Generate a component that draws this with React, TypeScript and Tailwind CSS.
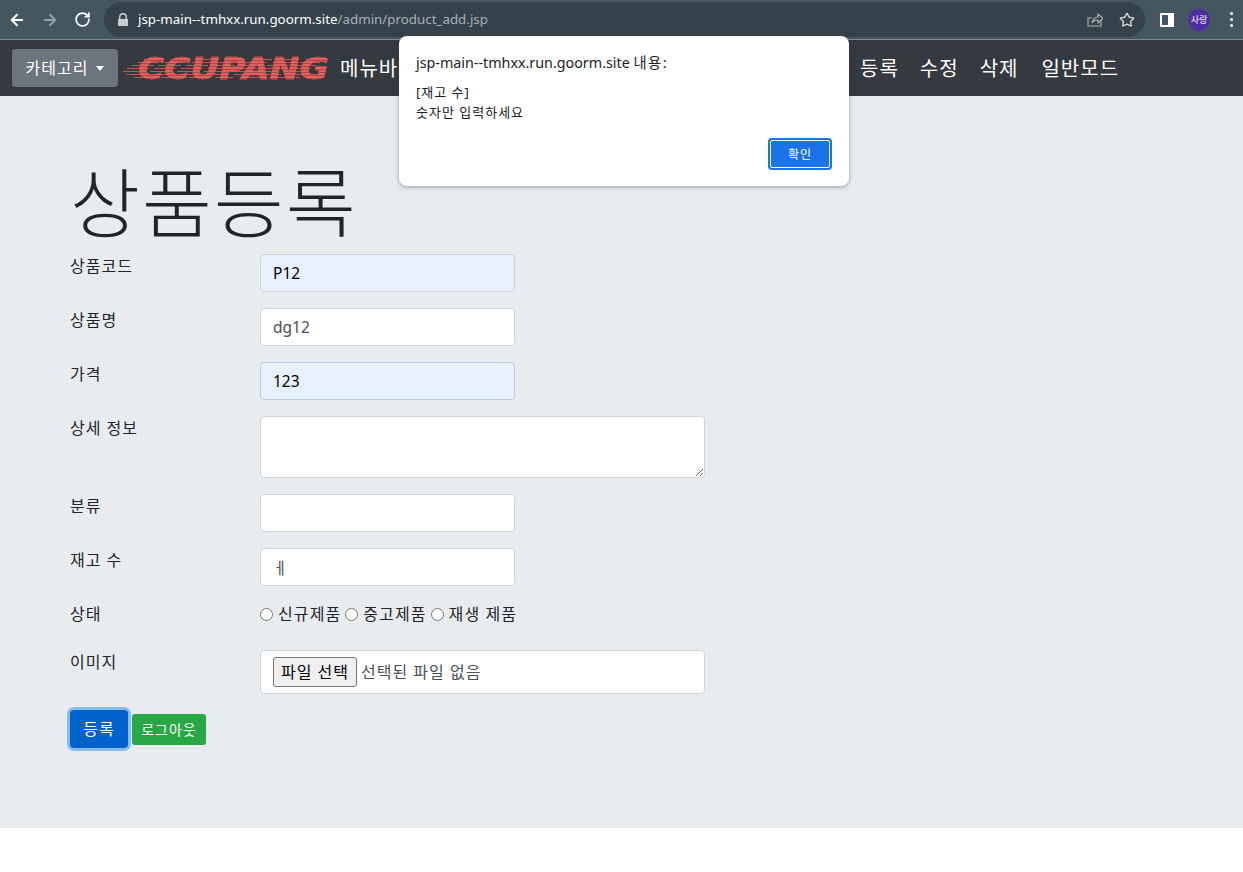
import { ArrowLeft, ArrowRight, RotateCw, Star } from "lucide-react";

const FONT = "font-['Noto_Sans','Noto_Sans_CJK_KR',sans-serif]";

const Field = ({ label, children, className = "mb-4" }: { label: string; children: React.ReactNode; className?: string }) => (
  <div className={`flex ${className}`}>
    <label className="w-[190px] shrink-0 text-[16px] leading-6 tracking-[1px] text-[#212529]">{label}</label>
    {children}
  </div>
);

const inputBase = "h-[38px] w-[255px] rounded border px-3 text-[15.5px] leading-6 outline-none";
const inputClass = `${inputBase} border-[#ced4da] bg-white text-[#495057]`;

const Radio = ({ label }: { label: string }) => (
  <span className="mr-[4px] flex items-center gap-[5px]">
    <span className="h-[13px] w-[13px] rounded-full border border-[#767676] bg-white" />
    {label}
  </span>
);

const Logo = () => (
  <div className="relative ml-1 flex h-[26px] w-[208px] items-center">
    {/* speed lines behind the letters */}
    <svg className="absolute top-0 left-0" width="208" height="26" viewBox="0 0 208 26">
      <g stroke="#c9524f" strokeWidth="1">
        <path d="M22 4.5h180M16 7.5h182" strokeDasharray="20 7" />
        <path d="M10 10.5h184M5 13.5h186" strokeDasharray="22 5" />
        <path d="M1 16.5h186M4 19.5h180" strokeDasharray="20 7" />
        <path d="M12 22.5h166" strokeDasharray="18 9" />
      </g>
    </svg>
    <span className="absolute top-0 right-[1px] origin-right scale-x-[1.15] bg-[repeating-linear-gradient(180deg,#e8605c_0px,#e8605c_2px,#a8484a_2px,#a8484a_3px)] bg-clip-text font-['DejaVu_Sans',sans-serif] text-[31px] leading-[26px] font-bold tracking-[0px] text-transparent italic [-webkit-text-stroke:0.5px_#d9534f]">
      CCUPANG
    </span>
  </div>
);

export default function App() {
  return (
    <div className={`relative min-h-[872px] bg-white ${FONT}`}>
      {/* browser toolbar */}
      <div className="flex h-10 items-center border-b border-[#7d8c94] bg-[#445761] pr-2 pl-2">
        <ArrowLeft className="h-[18px] w-[18px] text-white" strokeWidth={2.5} />
        <ArrowRight className="ml-[15px] h-[18px] w-[18px] text-[#93a0a7]" strokeWidth={2.5} />
        <RotateCw className="ml-[15px] h-[17px] w-[17px] text-white" strokeWidth={2.5} />
        <div className="ml-[13px] flex h-[35px] w-[1041px] items-center rounded-full bg-[#36424b] pr-[10px] pl-[13px]">
          <svg width="12" height="14" viewBox="0 0 12 14" fill="#c6ced3">
            <path d="M2 6V4a4 4 0 0 1 8 0v2h1v7H1V6zm1.5 0h5V4a2.5 2.5 0 0 0-5 0z" />
          </svg>
          <span className="ml-[9px] text-[13.35px] text-white">
            jsp-main--tmhxx.run.goorm.site<span className="text-[#a5b0b7]">/admin/product_add.jsp</span>
          </span>
          <svg className="ml-auto" width="16" height="16" viewBox="0 0 16 16" fill="none" stroke="#aab4ba" strokeWidth="1.1">
            <path d="M14 8v6H1V6h4" />
            <path d="M5 11c1-4 3-6 6-6V2l5 4.5L11 11V8c-3 0-5 1-6 3z" />
          </svg>
          <Star className="ml-4 h-[16px] w-[16px] text-[#d5dbde]" strokeWidth={2} />
        </div>
        <div className="ml-[15px] h-[14px] w-[14px] border-[2px] border-r-[6px] border-white bg-[#445761]" />
        <div className="ml-[14px] flex h-[22px] w-[22px] items-center justify-center rounded-full bg-[#4e2da0] text-[9px] text-white">
          사랑
        </div>
        <div className="ml-[20px] flex flex-col gap-[3px]">
          <span className="h-[3px] w-[3px] rounded-full bg-white" />
          <span className="h-[3px] w-[3px] rounded-full bg-white" />
          <span className="h-[3px] w-[3px] rounded-full bg-white" />
        </div>
      </div>

      {/* navbar */}
      <nav className="flex h-[56px] items-center bg-[#343a40] pl-3 text-[20px] tracking-[1px] text-white">
        <button className="flex h-[38px] w-[106px] items-center justify-center rounded bg-[#6c757d] text-[16px] text-white">
          카테고리
          <span className="ml-2 h-0 w-0 border-x-[4px] border-t-[5px] border-x-transparent border-t-white" />
        </button>
        <Logo />
        <span className="mt-[2px] ml-[10px] w-[520px]">메뉴바</span>
        <span className="mt-[2px]">등록</span>
        <span className="mt-[2px] ml-[21px]">수정</span>
        <span className="mt-[2px] ml-[21px]">삭제</span>
        <span className="mt-[2px] ml-[23px]">일반모드</span>
      </nav>

      {/* jumbotron */}
      <main className="h-[732px] bg-[#e9ecef] px-[70px] pt-[50px]">
        <h1 className="mb-[-2px] h-[110px] text-[76px] leading-[114px] font-light tracking-[2px] text-[#212529]">상품등록</h1>
        <Field label="상품코드">
          <input readOnly value="P12" className={`${inputBase} border-[#ced4da] bg-[#e8f0fe] text-black`} />
        </Field>
        <Field label="상품명">
          <input readOnly value="dg12" className={inputClass} />
        </Field>
        <Field label="가격">
          <input readOnly value="123" className={`${inputBase} border-[#b9cde5] bg-[#e8f0fe] text-black`} />
        </Field>
        <Field label="상세 정보">
          <textarea readOnly className="h-[62px] w-[445px] rounded border border-[#ced4da] bg-white" />
        </Field>
        <Field label="분류">
          <input readOnly className={inputClass} />
        </Field>
        <Field label="재고 수">
          <input readOnly value="ㅔ" className={inputClass} />
        </Field>
        <Field label="상태" className="mb-6">
          <div className="flex text-[16px] leading-6 tracking-[1.1px] text-[#212529]">
            <Radio label="신규제품" />
            <Radio label="중고제품" />
            <Radio label="재생 제품" />
          </div>
        </Field>
        <Field label="이미지">
          <div className="flex h-[44px] w-[445px] items-center rounded border border-[#ced4da] bg-white px-3 text-[16px] tracking-[1px] text-[#495057]">
            <span className="flex h-[30px] w-[84px] items-center justify-center rounded-[3px] border border-[#767676] bg-[#efefef] text-black">
              파일 선택
            </span>
            <span className="ml-[4px]">선택된 파일 없음</span>
          </div>
        </Field>
        <div className="flex items-center gap-1">
          <button className="h-[38px] w-[58px] rounded bg-[#0062cc] text-[16px] tracking-[1px] text-white shadow-[0_0_0_3px_rgba(38,143,255,0.5)]">
            등록
          </button>
          <button className="h-[31px] w-[74px] rounded-[3px] bg-[#28a745] text-[14px] tracking-[1px] text-white">로그아웃</button>
        </div>
      </main>

      {/* alert dialog */}
      <div className="absolute top-[36px] left-[399px] h-[150px] w-[450px] rounded-lg bg-white px-[17px] pt-[17px] shadow-[0_1px_4px_rgba(60,64,67,0.5)]">
        <p className="text-[14.3px] leading-[20px] text-[#202124]">
          jsp-main--tmhxx.run.goorm.site <span className="tracking-[1.5px]">내용:</span>
        </p>
        <p className="mt-[9px] text-[13px] leading-[20px] tracking-[1px] text-[#202124]">
          [재고 수]
          <br />
          숫자만 입력하세요
        </p>
        <div className="mt-[16px] flex justify-end">
          <button className="h-[32px] w-[64px] rounded border-[2px] border-[#1a73e8] bg-[#1a73e8] pt-[2px] text-[12px] tracking-[1px] text-white outline outline-1 -outline-offset-[3px] outline-white">
            확인
          </button>
        </div>
      </div>
    </div>
  );
}
